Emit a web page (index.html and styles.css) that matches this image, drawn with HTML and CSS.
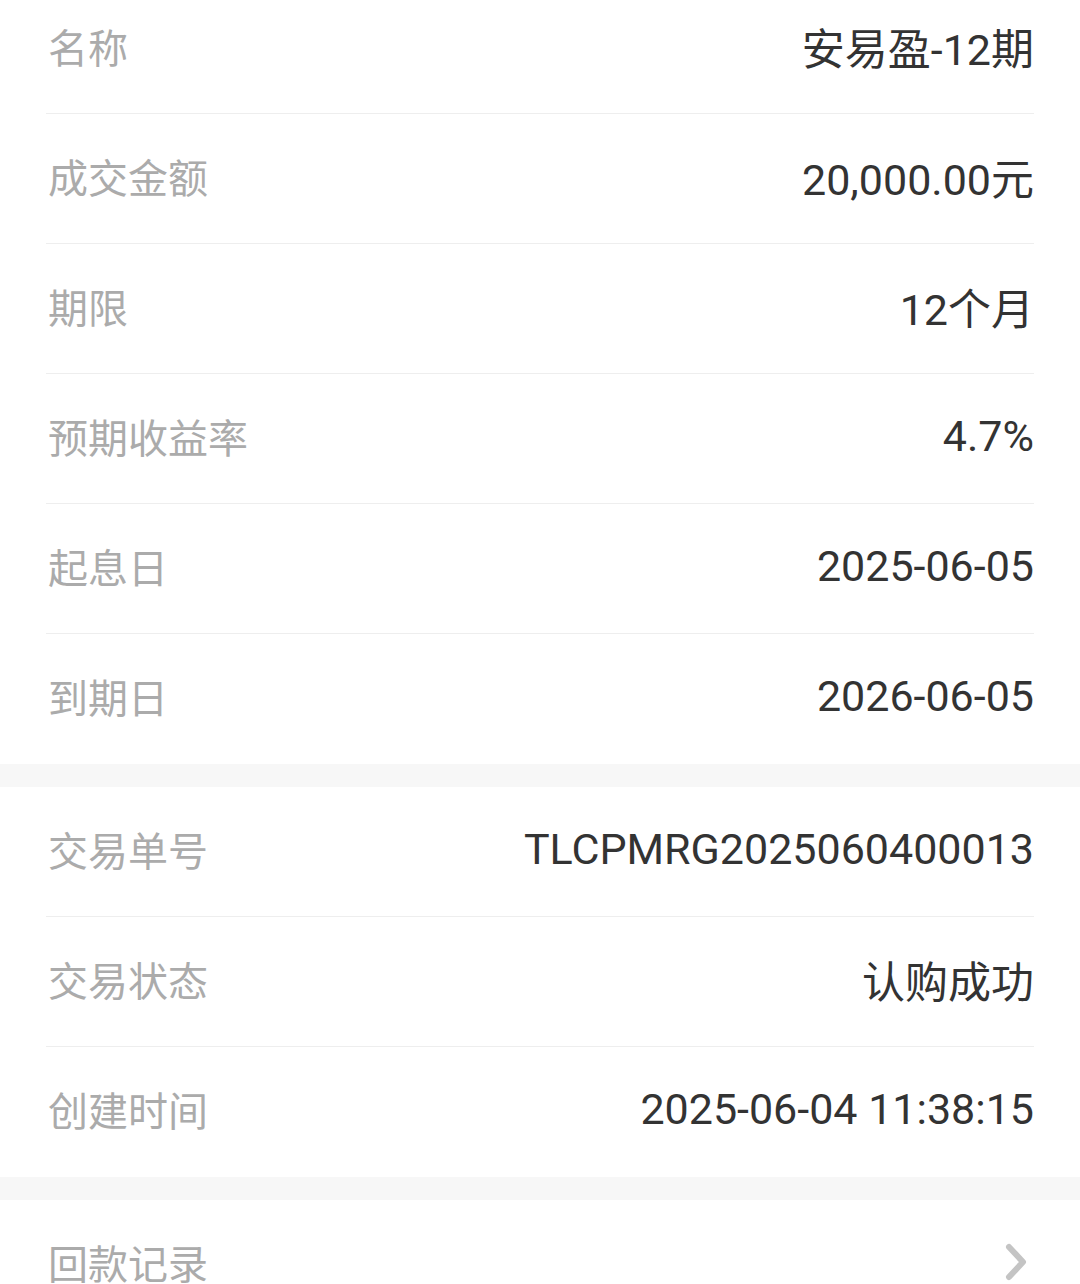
FILE: index.html
```html
<!DOCTYPE html>
<html lang="zh-CN">
<head>
<meta charset="utf-8">
<link rel="stylesheet" href="styles.css">
</head>
<body>
<div class="page">
  <section class="group first">
    <div class="row"><span class="label">名称</span><span class="value">安易盈-12期</span></div>
    <div class="row"><span class="label">成交金额</span><span class="value">20,000.00元</span></div>
    <div class="row"><span class="label">期限</span><span class="value">12个月</span></div>
    <div class="row"><span class="label">预期收益率</span><span class="value">4.7%</span></div>
    <div class="row"><span class="label">起息日</span><span class="value">2025-06-05</span></div>
    <div class="row last"><span class="label">到期日</span><span class="value">2026-06-05</span></div>
  </section>
  <section class="group">
    <div class="row"><span class="label">交易单号</span><span class="value">TLCPMRG2025060400013</span></div>
    <div class="row"><span class="label">交易状态</span><span class="value">认购成功</span></div>
    <div class="row last"><span class="label">创建时间</span><span class="value">2025-06-04 11:38:15</span></div>
  </section>
  <section class="group">
    <div class="row last link"><span class="label">回款记录</span>
      <svg class="chev" width="26" height="38" viewBox="0 0 26 38"><polyline points="5,4 19,19 5,34" fill="none" stroke="#c4c4c4" stroke-width="6" stroke-linecap="round" stroke-linejoin="round"/></svg>
    </div>
  </section>
</div>
</body>
</html>
```
FILE: styles.css
```css
html, body {
  margin: 0;
  padding: 0;
  background: #f7f7f7;
}
.page {
  display: flex;
  flex-direction: column;
  gap: 23px;
  margin-top: -16px;
}
.group {
  background: #ffffff;
  padding: 0 46px;
}
.row {
  height: 130px;
  box-sizing: border-box;
  border-bottom: 1px solid #eeeeee;
  display: flex;
  align-items: center;
  justify-content: space-between;
  padding: 0 0 6px 2px;
}
.row.last {
  border-bottom: none;
}
.label {
  font-family: "Noto Sans CJK SC", sans-serif;
  font-size: 40px;
  color: #ababab;
}
.value {
  font-family: "Roboto", "Noto Sans CJK SC", sans-serif;
  font-size: 43px;
  color: #333333;
}
.chev {
  display: block;
  margin-right: 4px;
}
```
